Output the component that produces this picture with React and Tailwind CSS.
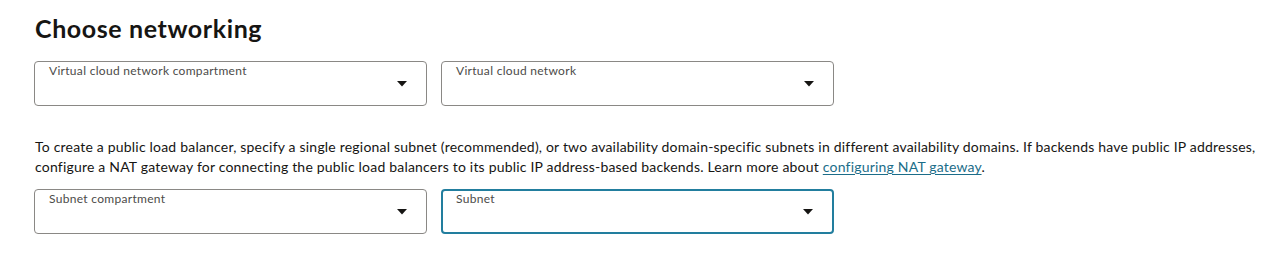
import React from 'react';

function Caret() {
    return (
        <svg width="10" height="6" viewBox="0 0 10 6" className="shrink-0">
            <path d="M0 0 L10 0 L5 5.5 Z" fill="#161513" />
        </svg>
    );
}

function SelectField({ label, focused }) {
    return (
        <div
            className={
                focused
                    ? 'relative w-[393px] h-[45px] rounded-[4px] border-2 border-[#227e9e] bg-white'
                    : 'relative w-[393px] h-[45px] rounded-[4px] border border-[#8a8885] bg-white'
            }
        >
            <div
                className={
                    focused
                        ? 'absolute left-[13px] top-[0px] text-[12px] leading-[16px] tracking-[0.3px] text-[#4c4b49]'
                        : 'absolute left-[14px] top-[1px] text-[12px] leading-[16px] tracking-[0.3px] text-[#4c4b49]'
                }
            >
                {label}
            </div>
            <div
                className={
                    focused
                        ? 'absolute right-[19px] top-[18px] flex'
                        : 'absolute right-[19px] top-[19px] flex'
                }
            >
                <Caret />
            </div>
        </div>
    );
}

export default function App() {
    return (
        <div
            className="w-[1264px] h-[254px] bg-white text-[#161513] pl-[34px] pt-[12px]"
            style={{ fontFamily: 'Lato, "Noto Sans", sans-serif' }}
        >
            <h2 className="text-[25px] leading-[32px] font-bold tracking-[0.6px] pl-[1px]">
                Choose networking
            </h2>
            <div className="flex gap-[14px] mt-[17px]">
                <SelectField label="Virtual cloud network compartment" />
                <SelectField label="Virtual cloud network" />
            </div>
            <p className="mt-[31px] text-[14px] leading-[20px] tracking-[0.2px] pl-[1px] pr-[4px]">
                To create a public load balancer, specify a single regional subnet (recommended), or two availability domain-specific subnets in different availability domains. If backends have public IP addresses, configure a NAT gateway for connecting the public load balancers to its public IP address-based backends. Learn more about{' '}
                <a href="#" className="text-[#1c6d89] underline underline-offset-2">
                    configuring NAT gateway
                </a>
                .
            </p>
            <div className="flex gap-[14px] mt-[12px]">
                <SelectField label="Subnet compartment" />
                <SelectField label="Subnet" focused />
            </div>
        </div>
    );
}
